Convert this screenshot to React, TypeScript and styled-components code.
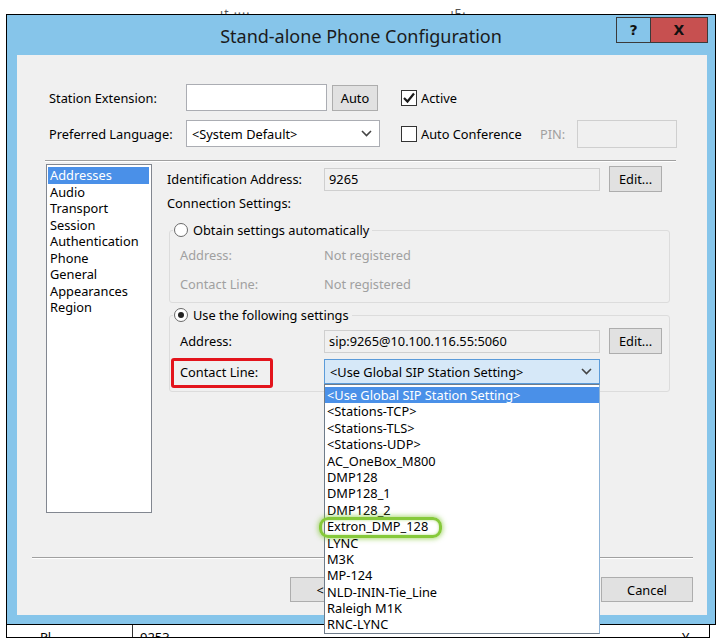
import React from "react"
import styled, { createGlobalStyle, css } from "styled-components"

const GlobalStyle = createGlobalStyle`
  html, body {
    margin: 0;
    padding: 0;
    background: #fff;
  }
  body {
    font-family: "Noto Sans", "Open Sans", sans-serif;
    font-size: 12.8px;
    color: #000;
  }
`

const Page = styled.div`
  width: 724px;
  height: 643px;
  background: #fff;
  overflow: hidden;
`

// scraps of the window behind, cut by the dialog
const TopStrip = styled.div`
  height: 14px;
  overflow: hidden;
  display: flex;
  color: #555;
  font-size: 12px;
  line-height: 14px;
`

const Scrap = styled.span<{ $x: number }>`
  margin-left: ${({ $x }) => $x}px;
  padding-top: 7px;
  letter-spacing: 1px;
`

const Window = styled.div`
  margin-left: 6px;
  width: 710px;
  box-sizing: border-box;
  border: 1px solid #000;
  background: #86c5ea;
`

const TitleBar = styled.div`
  height: 40px;
  display: grid;
  grid-template-columns: 1fr auto 1fr;
  align-items: center;
`

const TitleText = styled.div`
  grid-column: 2;
  font-size: 18px;
  color: #1b1b1b;
  padding-top: 2px;
`

const CaptionButtons = styled.div`
  grid-column: 3;
  justify-self: end;
  align-self: start;
  display: flex;
  margin: 2px 7px 0 0;
`

const CaptionButton = styled.div<{ $close?: boolean }>`
  width: ${({ $close }) => ($close ? "57px" : "35px")};
  height: 26px;
  box-sizing: border-box;
  border: 1px solid #3a3a3a;
  background: ${({ $close }) => ($close ? "#c75050" : "#86c5ea")};
  display: flex;
  align-items: center;
  justify-content: center;
  font-family: "DejaVu Sans", sans-serif;
  font-weight: bold;
  font-size: 14px;
  color: #111;
  ${({ $close }) =>
    $close &&
    css`
      border-left: none;
    `}
`

const Client = styled.div`
  margin: 0 8px 9px 10px;
  height: 560px;
  box-sizing: border-box;
  background: #f0f0f0;
  padding: 29px 14px 13px 15px;
  display: flex;
  flex-direction: column;
`

const TopForm = styled.div`
  margin-left: 17px;
  display: grid;
  grid-template-columns: 137px 194px 1fr;
  grid-auto-rows: 27px;
  row-gap: 9px;
  align-items: center;
`

const Inline = styled.div`
  display: flex;
  align-items: center;
  gap: 5px;
`

const TextBox = styled.div<{ $width: number; $height?: number }>`
  width: ${({ $width }) => $width}px;
  height: ${({ $height }) => $height ?? 27}px;
  box-sizing: border-box;
  border: 1px solid #abadb3;
  background: #fff;
`

const DisabledBox = styled(TextBox)`
  border-color: #cfcfcf;
  background: #f0f0f0;
`

const ComboBox = styled.div<{ $width: number; $height: number; $open?: boolean }>`
  position: relative;
  width: ${({ $width }) => $width}px;
  height: ${({ $height }) => $height}px;
  box-sizing: border-box;
  border: 1px solid ${({ $open }) => ($open ? "#5b9bd9" : "#abadb3")};
  background: ${({ $open }) => ($open ? "#d6e8f8" : "#fff")};
  display: flex;
  align-items: center;
  justify-content: space-between;
  padding: 0 7px 0 5px;
`

const PushButton = styled.div<{ $width: number; $height: number }>`
  width: ${({ $width }) => $width}px;
  height: ${({ $height }) => $height}px;
  box-sizing: border-box;
  border: 1px solid #adadad;
  background: #e1e1e1;
  display: flex;
  align-items: center;
  justify-content: center;
  white-space: nowrap;
`

const EditButton = styled(PushButton)`
  margin-left: 9px;
`

const OptionCell = styled.div`
  padding-left: 21px;
  display: flex;
  align-items: center;
`

const CheckField = styled.label<{ $width?: number }>`
  display: flex;
  align-items: center;
  gap: 4px;
  width: ${({ $width }) => ($width ? `${$width}px` : "auto")};
`

const CheckBox = styled.span`
  width: 16px;
  height: 16px;
  box-sizing: border-box;
  border: 1px solid #333;
  background: #fff;
  display: inline-flex;
  align-items: center;
  justify-content: center;
`

const Muted = styled.span`
  color: #a0a0a0;
`

const PinLabel = styled(Muted)`
  width: 37px;
`

const Separator = styled.div`
  height: 0;
  border-top: 1px solid #a0a0a0;
  border-bottom: 1px solid #fff;
`

const TopSeparator = styled(Separator)`
  margin: 13px 17px 0 13px;
`

const BottomSeparator = styled(Separator)`
  margin-top: 44px;
`

const Main = styled.div`
  margin: 2px 0 0 14px;
  height: 349px;
  display: flex;
`

const ListBox = styled.div`
  width: 106px;
  box-sizing: border-box;
  border: 1px solid #828790;
  background: #fff;
  padding: 2px 2px 0 1px;
`

const ListItem = styled.div<{ $selected?: boolean }>`
  height: 16.5px;
  line-height: 16.5px;
  padding-left: 2px;
  white-space: nowrap;
  ${({ $selected }) =>
    $selected &&
    css`
      background: #4a90e8;
      color: #fff;
    `}
`

const RightPanel = styled.div`
  margin-left: 15px;
  width: 503px;
  display: flex;
  flex-direction: column;
`

const FieldRow = styled.div<{ $label: number; $height: number }>`
  display: grid;
  grid-template-columns: ${({ $label }) => $label}px 276px auto;
  height: ${({ $height }) => $height}px;
  align-items: center;
  white-space: nowrap;
`

const IdRow = styled(FieldRow)`
  margin-top: 2px;
`

const ReadOnly = styled.div`
  height: 23px;
  box-sizing: border-box;
  border: 1px solid #cfcfcf;
  background: #f0f0f0;
  padding-left: 4px;
  display: flex;
  align-items: center;
`

const Caption = styled.div`
  margin-top: 2px;
  line-height: 18px;
`

const Group = styled.fieldset<{ $top: number }>`
  margin: ${({ $top }) => $top}px 0 0 2px;
  width: 501px;
  box-sizing: border-box;
  border: 1px solid #dcdcdc;
  border-radius: 3px;
  padding: 0;
  min-width: 0;
`

const GroupLegend = styled.legend`
  margin-left: 3px;
  padding: 0 3px 0 1px;
  height: 18px;
  display: flex;
  align-items: center;
  gap: 5px;
`

const Radio = styled.span<{ $checked?: boolean }>`
  width: 14px;
  height: 14px;
  box-sizing: border-box;
  border-radius: 50%;
  border: 1px solid #6a6a6a;
  background: #fff;
  display: inline-flex;
  align-items: center;
  justify-content: center;
  &::after {
    content: "";
    width: 6px;
    height: 6px;
    border-radius: 50%;
    background: ${({ $checked }) => ($checked ? "#222" : "transparent")};
  }
`

const GroupBody = styled.div<{ $pad: string }>`
  padding: ${({ $pad }) => $pad};
  display: flex;
  flex-direction: column;
`

const InfoRow = styled.div`
  height: 29px;
  display: grid;
  grid-template-columns: 144px 1fr;
  align-items: center;
  color: #a0a0a0;
`

const Spacer = styled.div<{ $h: number }>`
  height: ${({ $h }) => $h}px;
`

const Annotated = styled.span`
  position: relative;
  line-height: 18px;
  &::after {
    content: "";
    position: absolute;
    left: -9px;
    top: -5px;
    width: 102px;
    height: 30px;
    box-sizing: border-box;
    border: 3px solid #e3141c;
    border-radius: 3px;
  }
`

const DropList = styled.div`
  position: absolute;
  z-index: 10;
  top: calc(100% + 1px);
  left: -1px;
  width: 276px;
  box-sizing: border-box;
  border: 1px solid #6f7c8a;
  border-right-color: #8fb3d6;
  background: #fff;
  padding: 2px 0 0;
`

const DropItem = styled.div<{ $selected?: boolean; $marked?: boolean }>`
  position: relative;
  height: 16.4px;
  line-height: 16.4px;
  padding-left: 2px;
  white-space: nowrap;
  ${({ $selected }) =>
    $selected &&
    css`
      background: #4a90e8;
      color: #fff;
    `}
  ${({ $marked }) =>
    $marked &&
    css`
      &::after {
        content: "";
        position: absolute;
        left: -6px;
        top: -1px;
        width: 123px;
        height: 21px;
        box-sizing: border-box;
        border: 3px solid #86c93a;
        border-radius: 9px;
        box-shadow: 0 0 5px 1px rgba(134, 201, 58, 0.7),
          inset 0 0 3px rgba(134, 201, 58, 0.6);
      }
    `}
`

const ButtonRow = styled.div`
  margin-top: 18px;
  display: flex;
  justify-content: space-between;
  padding-left: 258px;
`

const BottomStrip = styled.div`
  margin-left: 6px;
  width: 702px;
  height: 12px;
  box-sizing: content-box;
  border-left: 1px solid #000;
  border-right: 1px solid #000;
  border-bottom: 1px solid #000;
  overflow: hidden;
  display: grid;
  grid-template-columns: 125px 1fr 60px;
  font-size: 13px;
  line-height: 16px;
`

const StripCell = styled.div<{ $divider?: boolean }>`
  padding: 4px 0 0 ${({ $divider }) => ($divider ? 7 : 33)}px;
  border-left: ${({ $divider }) => ($divider ? "1px solid #333" : "none")};
`

const Chevron = () => (
  <svg width="11" height="7" viewBox="0 0 11 7">
    <polyline points="1,1 5.5,5.5 10,1" fill="none" stroke="#444" strokeWidth="1.6" />
  </svg>
)

const Tick = () => (
  <svg width="14" height="14" viewBox="0 0 14 14">
    <polyline points="2,7 5.5,10.5 12,2.5" fill="none" stroke="#1a1a1a" strokeWidth="2.2" />
  </svg>
)

const sections = [
  "Addresses",
  "Audio",
  "Transport",
  "Session",
  "Authentication",
  "Phone",
  "General",
  "Appearances",
  "Region",
]

const lines = [
  "<Use Global SIP Station Setting>",
  "<Stations-TCP>",
  "<Stations-TLS>",
  "<Stations-UDP>",
  "AC_OneBox_M800",
  "DMP128",
  "DMP128_1",
  "DMP128_2",
  "Extron_DMP_128",
  "LYNC",
  "M3K",
  "MP-124",
  "NLD-ININ-Tie_Line",
  "Raleigh M1K",
  "RNC-LYNC",
]

export default function App() {
  return (
    <Page>
      <GlobalStyle />
      <TopStrip>
        <Scrap $x={9}>.....</Scrap>
        <Scrap $x={190}>ıṭ ····</Scrap>
        <Scrap $x={200}>ıE·</Scrap>
      </TopStrip>

      <Window>
        <TitleBar>
          <TitleText>Stand-alone Phone Configuration</TitleText>
          <CaptionButtons>
            <CaptionButton>?</CaptionButton>
            <CaptionButton $close>X</CaptionButton>
          </CaptionButtons>
        </TitleBar>

        <Client>
          <TopForm>
            <span>Station Extension:</span>
            <Inline>
              <TextBox $width={141} />
              <PushButton $width={46} $height={26}>
                Auto
              </PushButton>
            </Inline>
            <OptionCell>
              <CheckField>
                <CheckBox>
                  <Tick />
                </CheckBox>
                Active
              </CheckField>
            </OptionCell>

            <span>Preferred Language:</span>
            <ComboBox $width={194} $height={27}>
              <span>&lt;System Default&gt;</span>
              <Chevron />
            </ComboBox>
            <OptionCell>
              <CheckField $width={139}>
                <CheckBox />
                Auto Conference
              </CheckField>
              <PinLabel>PIN:</PinLabel>
              <DisabledBox $width={100} $height={28} />
            </OptionCell>
          </TopForm>

          <TopSeparator />

          <Main>
            <ListBox>
              {sections.map((s, i) => (
                <ListItem key={s} $selected={i === 0}>
                  {s}
                </ListItem>
              ))}
            </ListBox>

            <RightPanel>
              <IdRow $label={157} $height={26}>
                <span>Identification Address:</span>
                <ReadOnly>9265</ReadOnly>
                <EditButton $width={53} $height={26}>
                  Edit...
                </EditButton>
              </IdRow>
              <Caption>Connection Settings:</Caption>

              <Group $top={9}>
                <GroupLegend>
                  <Radio />
                  Obtain settings automatically
                </GroupLegend>
                <GroupBody $pad="1.5px 0 3.5px 10px">
                  <InfoRow>
                    <span>Address:</span>
                    <span>Not registered</span>
                  </InfoRow>
                  <InfoRow>
                    <span>Contact Line:</span>
                    <span>Not registered</span>
                  </InfoRow>
                </GroupBody>
              </Group>

              <Group $top={3}>
                <GroupLegend>
                  <Radio $checked />
                  Use the following settings
                </GroupLegend>
                <GroupBody $pad="4px 0 7px 10px">
                  <FieldRow $label={144} $height={26}>
                    <span>Address:</span>
                    <ReadOnly>sip:9265@10.100.116.55:5060</ReadOnly>
                    <EditButton $width={53} $height={26}>
                      Edit...
                    </EditButton>
                  </FieldRow>
                  <Spacer $h={5} />
                  <FieldRow $label={144} $height={25}>
                    <span>
                      <Annotated>Contact Line:</Annotated>
                    </span>
                    <ComboBox $width={276} $height={25} $open>
                      <span>&lt;Use Global SIP Station Setting&gt;</span>
                      <Chevron />
                      <DropList>
                        {lines.map((l, i) => (
                          <DropItem key={l} $selected={i === 0} $marked={l.startsWith("Extron")}>
                            {l}
                          </DropItem>
                        ))}
                      </DropList>
                    </ComboBox>
                  </FieldRow>
                </GroupBody>
              </Group>
            </RightPanel>
          </Main>

          <BottomSeparator />

          <ButtonRow>
            <PushButton $width={92} $height={25}>
              &lt; Back
            </PushButton>
            <PushButton $width={92} $height={25}>
              Cancel
            </PushButton>
          </ButtonRow>
        </Client>
      </Window>

      <BottomStrip>
        <StripCell>Pl</StripCell>
        <StripCell $divider>9253</StripCell>
        <StripCell>Y</StripCell>
      </BottomStrip>
    </Page>
  )
}
